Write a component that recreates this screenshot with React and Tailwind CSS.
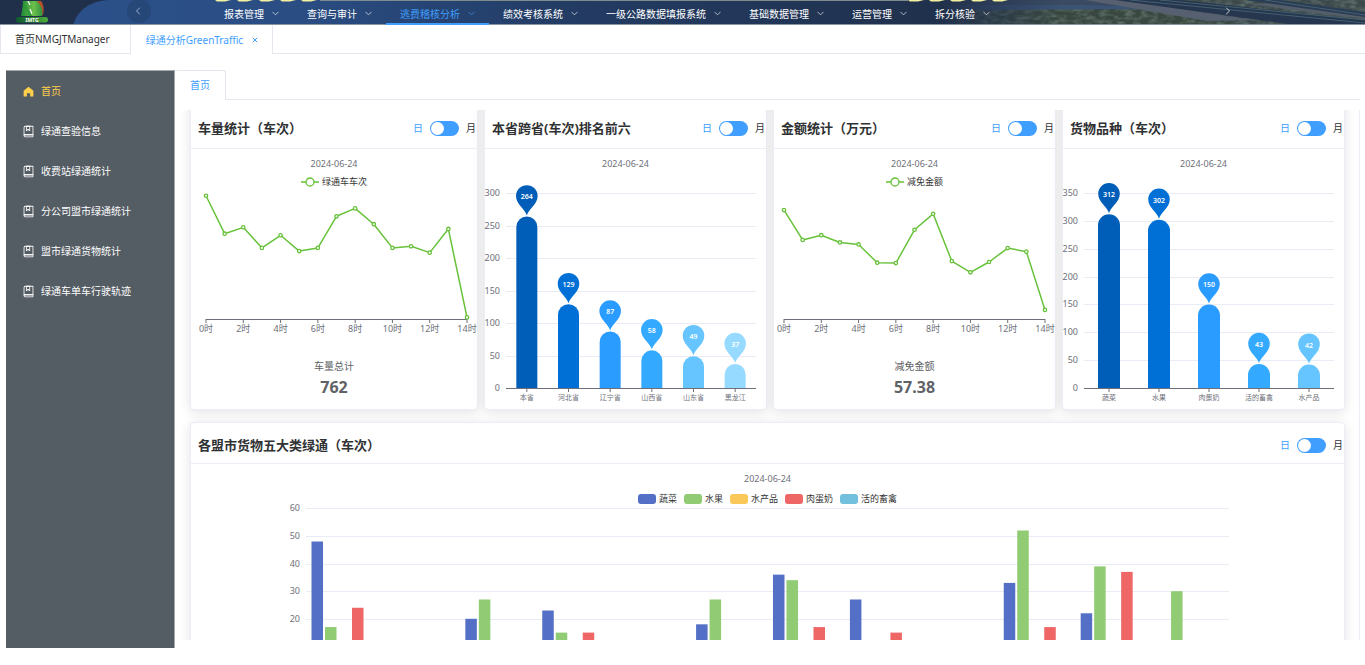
import React, { useState } from 'react';
import clsx from 'clsx';
import { ChevronDown, ChevronLeft, ChevronRight, X } from 'lucide-react';

const navItems = [
  '报表管理',
  '查询与审计',
  '逃费稽核分析',
  '绩效考核系统',
  '一级公路数据填报系统',
  '基础数据管理',
  '运营管理',
  '拆分核验',
];

const sideItems = [
  '首页',
  '绿通查验信息',
  '收费站绿通统计',
  '分公司盟市绿通统计',
  '盟市绿通货物统计',
  '绿通车单车行驶轨迹',
];

const hourlyTrucks = [78, 54, 58, 45, 53, 43, 45, 65, 70, 60, 45, 46, 42, 57, 1];
const hourlyAmount = [6.02, 4.37, 4.63, 4.23, 4.12, 3.11, 3.09, 4.93, 5.81, 3.2, 2.58, 3.15, 3.92, 3.72, 0.5];

const provinces = [
  { name: '本省', value: 264, color: '#005eb8' },
  { name: '河北省', value: 129, color: '#0070d6' },
  { name: '辽宁省', value: 87, color: '#2a9bff' },
  { name: '山西省', value: 58, color: '#33aaff' },
  { name: '山东省', value: 49, color: '#66c4ff' },
  { name: '黑龙江', value: 37, color: '#96daff' },
];

const goods = [
  { name: '蔬菜', value: 312, color: '#005eb8' },
  { name: '水果', value: 302, color: '#0070d6' },
  { name: '肉蛋奶', value: 150, color: '#2a9bff' },
  { name: '活的畜禽', value: 43, color: '#33aaff' },
  { name: '水产品', value: 42, color: '#66c4ff' },
];

const series = [
  { name: '蔬菜', color: '#5470c6' },
  { name: '水果', color: '#91cc75' },
  { name: '水产品', color: '#fac858' },
  { name: '肉蛋奶', color: '#ee6666' },
  { name: '活的畜禽', color: '#73c0de' },
];

// one row per city, values in the order of `series`
const cityGoods = [
  [48, 17, 0, 24, 0],
  [0, 0, 0, 0, 0],
  [20, 27, 0, 0, 0],
  [23, 15, 0, 15, 0],
  [0, 0, 0, 0, 0],
  [18, 27, 0, 0, 0],
  [36, 34, 0, 17, 0],
  [27, 0, 0, 15, 0],
  [0, 0, 0, 0, 0],
  [33, 52, 0, 17, 0],
  [22, 39, 0, 37, 0],
  [0, 30, 0, 0, 0],
];

const HomeIcon = () => (
  <svg viewBox="0 0 1024 1024" className="size-[13px] shrink-0" fill="currentColor">
    <path d="M512 128 128 447.936V896h255.936V640H640v256h255.936V447.936z" />
  </svg>
);

const CollectionIcon = () => (
  <svg viewBox="0 0 1024 1024" className="size-[13px] shrink-0" fill="currentColor">
    <path d="M192 736h640V128H256a64 64 0 0 0-64 64v544zm64-672h608a32 32 0 0 1 32 32v672a32 32 0 0 1-32 32H160l-32 57.536V192A128 128 0 0 1 256 64z" />
    <path d="M240 800a48 48 0 1 0 0 96h592v-96H240zm0-64h656v160a64 64 0 0 1-64 64H240a112 112 0 0 1 0-224zm144-608v250.88l96-76.8 96 76.8V128H384zm-64-64h320v381.44a32 32 0 0 1-51.968 24.96L480 384l-108.032 86.4A32 32 0 0 1 320 445.44V64z" />
  </svg>
);

const Logo = () => (
  <svg viewBox="0 0 34 24" className="h-6 w-[34px] shrink-0">
    <defs>
      <linearGradient id="leaf" x1="0" x2="1">
        <stop offset="0" stopColor="#1c8a35" />
        <stop offset="0.6" stopColor="#6cc04a" />
        <stop offset="1" stopColor="#2f9140" />
      </linearGradient>
      <linearGradient id="plate" x1="0" x2="1">
        <stop offset="0" stopColor="#0e5a2c" />
        <stop offset="1" stopColor="#4fae3c" />
      </linearGradient>
    </defs>
    <path d="M21 0h4c3 4 3 9 2 14h-4z" fill="#b5502a" />
    <path d="M5 15C6 9 7 4 7 0h14c5 5 6 10 5 15z" fill="url(#leaf)" />
    <path d="M8 0c1 5 5 8 8 15h-3C11 9 8 5 7 0z" fill="#2f9a3c" />
    <path d="M12 0l2 4M14 8l2 5" stroke="#fff" strokeWidth="1.2" />
    <rect x="0" y="16" width="32" height="5.5" rx="2.7" fill="url(#plate)" />
    <text x="16" y="20.6" textAnchor="middle" fontSize="5" fontWeight="700" fill="#fff">
      IMTG
    </text>
  </svg>
);

// Night motorway banner behind the top navigation
const Banner = () => (
  <svg viewBox="0 0 1365 25" preserveAspectRatio="none" className="absolute inset-0 size-full">
    <defs>
      <linearGradient id="pill" x1="0" x2="1">
        <stop offset="0" stopColor="#2b5089" />
        <stop offset="0.25" stopColor="#2a4d83" />
        <stop offset="0.55" stopColor="#233c64" />
        <stop offset="1" stopColor="#20304b" />
      </linearGradient>
      <linearGradient id="fade" x1="0" x2="1">
        <stop offset="0" stopColor="#20304b" />
        <stop offset="1" stopColor="#20304b" stopOpacity="0" />
      </linearGradient>
      <filter id="grass" x="0" y="0" width="100%" height="100%">
        <feTurbulence type="fractalNoise" baseFrequency="0.12 0.25" numOctaves="3" seed="4" />
        <feColorMatrix values="0 0 0 0 0.14  0 0 0 0 0.2  0 0 0 0 0.18  0 2.4 0 0 -0.9" />
      </filter>
    </defs>
    <rect width="1365" height="25" fill="#20304b" />
    <path d="M73 25C78 10 90 0 112 0H960V25z" fill="url(#pill)" />
    <path d="M320 0h588v1H320z" fill="#7f8c8d" />

    <rect x="940" width="425" height="25" fill="#3d4a4c" />
    <path d="M1000 8h180l60 17H960z" fill="#38473f" />
    <rect x="940" width="425" height="25" filter="url(#grass)" opacity="0.7" />
    <path d="M940 0h150l40 6H940z" fill="#3a4a62" />
    <path d="M940 5h140l75 2-5 2-210 1z" fill="#3b5374" />
    <path d="M1085 0h38l130 20-46 1z" fill="#566070" />
    <path d="M1250 4l50 7 65 8v-4l-80-12z" fill="#545e6a" />
    <path d="M1115 0h65l185 20v5h-70z" fill="#26364f" />
    <path d="M1245 0h35l85 12v5z" fill="#2b3c55" />
    <path d="M1130 0l235 23M1160 0l205 20M1265 0l100 15" stroke="#4b6b76" strokeWidth="0.8" fill="none" />
    <rect x="940" width="120" height="25" fill="url(#fade)" />
    {[215, 237, 259, 280, 301, 908, 929, 950, 971, 992].map((x) => (
      <path key={x} d={`M${x} 0h16l-6 1.5h-8z`} fill="#f3f0a0" />
    ))}
    <rect y="24" width="1365" height="1" fill="#8b94a3" />
    <circle cx="139" cy="11" r="12" fill="#264879" />
  </svg>
);

const PeriodSwitch = ({ label }) => {
  const [monthly, setMonthly] = useState(false);

  return (
    <label className="flex items-center gap-[7px] text-[10px] leading-none">
      <span className={monthly ? 'text-[#303133]' : 'text-[#409eff]'}>日</span>
      <input
        type="checkbox"
        role="switch"
        aria-label={label}
        checked={monthly}
        onChange={(e) => setMonthly(e.target.checked)}
        className="h-[15px] w-[29px] cursor-pointer appearance-none rounded-full bg-[#409eff] before:m-px before:block before:size-[13px] before:rounded-full before:bg-white checked:before:ml-[15px]"
      />
      <span className={monthly ? 'text-[#409eff]' : 'text-[#303133]'}>月</span>
    </label>
  );
};

const Card = ({ title, wide, children }) => (
  <section
    className={clsx(
      'rounded-[4px] border border-[#ebeef5] bg-white shadow-[0_2px_12px_rgba(0,0,0,0.12)]',
      !wide && 'pt-5'
    )}
  >
    <header
      className={clsx(
        'flex items-center justify-between border-b border-[#ebeef5] pr-px pl-[7px]',
        wide ? 'h-[41px] pt-1' : 'h-[38px] pb-[3px]'
      )}
    >
      <h2 className="text-[13px] leading-5 font-bold text-[#303133]">{title}</h2>
      <PeriodSwitch label={`${title} 日/月`} />
    </header>
    <p className="pt-2 text-center text-[9px] leading-[14px] text-[#6e7079]">2024-06-24</p>
    {children}
  </section>
);

const LineChart = ({ data, left, width, unit }) => {
  const step = 261 / 14;
  const base = 130;
  const points = data.map((v, i) => [left + i * step, base - v * unit]);

  return (
    <svg viewBox={`0 0 ${width} 150`} className="block w-full overflow-visible">
      <path d={`M${left} ${base + 0.5}h261`} stroke="#6e7079" />
      {data.map((_, i) =>
        i % 2 === 0 ? (
          <g key={i}>
            <path d={`M${left + i * step} ${base}v4`} stroke="#6e7079" />
            <text x={left + i * step} y={base + 13} textAnchor="middle" fontSize="9" fill="#6e7079">
              {i}时
            </text>
          </g>
        ) : null
      )}
      <polyline points={points.join(' ')} fill="none" stroke="#67c23a" strokeWidth="1.5" strokeLinejoin="bevel" />
      {points.map(([x, y]) => (
        <circle key={x} cx={x} cy={y} r="1.7" fill="#fff" stroke="#67c23a" strokeWidth="1.3" />
      ))}
    </svg>
  );
};

const LineCard = ({ title, legend, totalLabel, total, ...chart }) => (
  <Card title={title}>
    <div className="mt-1 flex items-center justify-center gap-[3px] text-[9px] leading-[14px] text-[#333]">
      <svg viewBox="0 0 18 10" className="h-[10px] w-[18px]">
        <path d="M0 5h18" stroke="#67c23a" strokeWidth="1.5" />
        <circle cx="9" cy="5" r="4" fill="#fff" stroke="#67c23a" strokeWidth="1.3" />
      </svg>
      {legend}
    </div>
    <LineChart {...chart} />
    <div className="pt-5 pb-3 text-center text-[#606266]">
      <p className="text-[10px] leading-[14px]">{totalLabel}</p>
      <p className="mt-1 text-[16px] leading-5 font-bold">{total}</p>
    </div>
  </Card>
);

const PinBarChart = ({ data, max, barWidth }) => {
  const left = 21;
  const base = 217;
  const unit = 195 / max;
  const slot = 250 / data.length;
  const r = barWidth / 2;
  const ticks = Array.from({ length: max / 50 + 1 }, (_, i) => i * 50);

  return (
    <svg viewBox="0 0 281 238" className="block w-full overflow-visible">
      {ticks.map((t) => (
        <g key={t}>
          <path
            d={`M${left} ${Math.round(base - t * unit) + 0.5}h250`}
            stroke={t === 0 ? '#6e7079' : '#e8ecf5'}
          />
          <text x={left - 6} y={base - t * unit + 3} textAnchor="end" fontSize="9" fill="#6e7079">
            {t}
          </text>
        </g>
      ))}
      {data.map((d, i) => {
        const x = left + slot * (i + 0.5);
        const y = base - d.value * unit;
        return (
          <g key={d.name}>
            <path d={`M${x - r} ${base}V${y + r}a${r} ${r} 0 0 1 ${barWidth} 0V${base}z`} fill={d.color} />
            <path
              d={`M${x} ${y - 1}c-1.5-6-10.8-11-10.8-19.4a10.8 10.8 0 0 1 21.6 0c0 8.4-9.3 13.4-10.8 19.4z`}
              fill={d.color}
            />
            <text x={x} y={y - 17} textAnchor="middle" fontSize="7" fontWeight="600" fill="#fff">
              {d.value}
            </text>
            <path d={`M${x} ${base + 1}v3`} stroke="#6e7079" />
            <text x={x} y={base + 12} textAnchor="middle" fontSize="7" fill="#6e7079">
              {d.name}
            </text>
          </g>
        );
      })}
    </svg>
  );
};

const CityGoodsChart = () => {
  const left = 115;
  const width = 923;
  const base = 168;
  const unit = 2.76;
  const slot = width / cityGoods.length;

  return (
    <svg viewBox="0 0 1153 190" className="block w-full overflow-visible">
      {[20, 30, 40, 50, 60].map((t) => (
        <g key={t}>
          <path d={`M${left} ${Math.round(base - t * unit) + 0.5}h${width}`} stroke="#e8ecf5" />
          <text x={left - 6} y={base - t * unit + 3} textAnchor="end" fontSize="9" fill="#6e7079">
            {t}
          </text>
        </g>
      ))}
      {cityGoods.map((row, i) =>
        row.map((v, s) => (
          <rect
            key={`${i}-${s}`}
            x={left + i * slot + 5.5 + s * 13.5}
            y={base - v * unit}
            width="11.5"
            height={v * unit}
            fill={series[s].color}
          />
        ))
      )}
    </svg>
  );
};

const App = () => {
  const [activeNav, setActiveNav] = useState('逃费稽核分析');
  const [activeSide, setActiveSide] = useState('首页');

  return (
    <div className="flex h-screen flex-col overflow-hidden bg-white font-['Noto_Sans','Noto_Sans_CJK_SC',sans-serif] text-[10px] text-[#303133]">
      {/* Top navigation */}
      <header className="relative h-[25px] shrink-0">
        <Banner />
        <div className="relative flex h-[25px] items-center pl-4">
          <Logo />
          <button type="button" aria-label="向左" className="ml-[82px] pb-1 text-[#c5d0e2]">
            <ChevronLeft className="size-3" strokeWidth={1.5} />
          </button>
          <nav className="ml-[66px] flex h-[25px]">
            {navItems.map((item) => (
              <button
                key={item}
                type="button"
                onClick={() => setActiveNav(item)}
                className={clsx(
                  'flex items-center gap-[6px] border-b-2 pt-1 pr-3 pl-[14px] leading-4 whitespace-nowrap',
                  activeNav === item ? 'border-[#409eff] text-[#409eff]' : 'border-transparent text-white'
                )}
              >
                {item}
                <ChevronDown className="size-[11px] opacity-70" strokeWidth={2} />
              </button>
            ))}
          </nav>
          <button type="button" aria-label="向右" className="mr-[131px] ml-auto pb-1 text-white">
            <ChevronRight className="size-3" strokeWidth={1.5} />
          </button>
        </div>
      </header>

      {/* Opened pages */}
      <div className="flex h-[29px] shrink-0 leading-4">
        <a
          href="#manager"
          className="flex items-center border-x border-b border-[#e4e7ed] pr-5 pl-[14px] text-[#303133]"
        >
          首页NMGJTManager
        </a>
        <div className="flex items-center gap-2 border-r border-[#e4e7ed] pr-[13px] pl-[15px] text-[#409eff]">
          <a href="#green">绿通分析GreenTraffic</a>
          <button type="button" aria-label="关闭">
            <X className="size-2" strokeWidth={3} />
          </button>
        </div>
        <div className="flex-1 border-b border-[#e4e7ed]" />
      </div>

      <div className="flex min-h-0 flex-1 pt-4 pb-[17px] pl-[6px]">
        {/* Sidebar */}
        <aside className="w-[169px] shrink-0 border-t border-r border-[#a3a8ad] bg-[#545c64]">
          <ul>
            {sideItems.map((item) => (
              <li key={item}>
                <button
                  type="button"
                  onClick={() => setActiveSide(item)}
                  className={clsx(
                    'flex h-10 w-full items-center gap-[6px] pl-4',
                    activeSide === item ? 'text-[#ffd04b]' : 'text-white'
                  )}
                >
                  {item === '首页' ? <HomeIcon /> : <CollectionIcon />}
                  {item}
                </button>
              </li>
            ))}
          </ul>
        </aside>

        {/* Content */}
        <div className="mr-[5px] mb-2 flex min-w-0 flex-1 flex-col">
          <div className="flex h-[30px] shrink-0">
            <a
              href="#home"
              className="flex items-center rounded-t-[3px] border-t border-r border-[#e4e7ed] px-[15px] text-[#409eff]"
            >
              首页
            </a>
            <div className="flex-1 border-b border-[#e4e7ed]" />
          </div>

          <main className="mt-[10px] min-h-0 flex-1 overflow-hidden border-r border-[#ebeef5] pr-[14px] pl-[15px]">
            <div className="-mt-5 grid grid-cols-[288fr_283fr_283fr_283fr] gap-[6px]">
              <LineCard
                title="车量统计（车次）"
                legend="绿通车车次"
                totalLabel="车量总计"
                total="762"
                data={hourlyTrucks}
                left={15}
                width={286}
                unit={1.58}
              />
              <Card title="本省跨省(车次)排名前六">
                <PinBarChart data={provinces} max={300} barWidth={21} />
              </Card>
              <LineCard
                title="金额统计（万元）"
                legend="减免金额"
                totalLabel="减免金额"
                total="57.38"
                data={hourlyAmount}
                left={10}
                width={281}
                unit={18.1}
              />
              <Card title="货物品种（车次）">
                <PinBarChart data={goods} max={350} barWidth={22} />
              </Card>
            </div>

            <div className="mt-3">
              <Card title="各盟市货物五大类绿通（车次）" wide>
                <ul className="mt-[6px] flex justify-center gap-[7px] text-[9px] leading-[14px] text-[#333]">
                  {series.map((s) => (
                    <li key={s.name} className="flex items-center gap-[3px]">
                      <span className="h-[10px] w-[18px] rounded-[3px]" style={{ backgroundColor: s.color }} />
                      {s.name}
                    </li>
                  ))}
                </ul>
                <CityGoodsChart />
              </Card>
            </div>
          </main>
        </div>
      </div>
    </div>
  );
};

export default App;
